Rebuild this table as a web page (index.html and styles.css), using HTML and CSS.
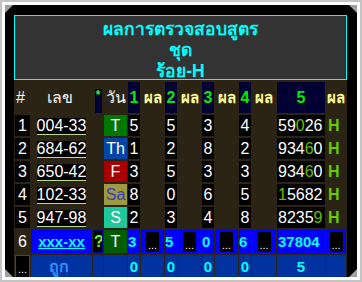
FILE: index.html
```html
<!DOCTYPE html>
<html lang="th">
<head>
<meta charset="utf-8">
<link rel="stylesheet" href="styles.css">
</head>
<body>
<div class="frame">
  <div class="bevel">
    <div class="box">
      <div class="title">ผลการตรวจสอบสูตร<br>ชุด<br>ร้อย-H</div>
      <table class="grid">
        <colgroup>
          <col class="c-idx"><col class="c-num"><col class="c-star"><col class="c-day">
          <col class="c-d"><col class="c-r"><col class="c-d"><col class="c-r">
          <col class="c-d"><col class="c-r"><col class="c-d"><col class="c-r4">
          <col class="c-five"><col class="c-res">
        </colgroup>
        <tr class="head">
          <th class="h-idx">#</th><th class="h-txt h-num">เลข</th><th class="h-star"><span class="star">*</span></th><th class="h-txt">วัน</th>
          <th class="hn">1</th><th class="hr">ผล</th>
          <th class="hn">2</th><th class="hr">ผล</th>
          <th class="hn">3</th><th class="hr">ผล</th>
          <th class="hn">4</th><th class="hr">ผล</th>
          <th class="hn">5</th><th class="hr">ผล</th>
        </tr>
        <tr class="data">
          <td class="blk idx">1</td><td class="numc"><span class="num">004-33</span></td><td></td><td class="day d-t">T</td>
          <td class="blk">5</td><td></td><td class="blk">5</td><td></td><td class="blk">3</td><td></td><td class="blk">4</td><td></td>
          <td class="blk five">59<span class="hit">0</span>26</td><td class="res">H</td>
        </tr>
        <tr class="data">
          <td class="blk idx">2</td><td class="numc"><span class="num">684-62</span></td><td></td><td class="day d-th">Th</td>
          <td class="blk">1</td><td></td><td class="blk">2</td><td></td><td class="blk">8</td><td></td><td class="blk">2</td><td></td>
          <td class="blk five">934<span class="hit">6</span>0</td><td class="res">H</td>
        </tr>
        <tr class="data">
          <td class="blk idx">3</td><td class="numc"><span class="num">650-42</span></td><td></td><td class="day d-f">F</td>
          <td class="blk">3</td><td></td><td class="blk">5</td><td></td><td class="blk">3</td><td></td><td class="blk">3</td><td></td>
          <td class="blk five">934<span class="hit">6</span>0</td><td class="res">H</td>
        </tr>
        <tr class="data">
          <td class="blk idx">4</td><td class="numc"><span class="num">102-33</span></td><td></td><td class="day d-sa">Sa</td>
          <td class="blk">8</td><td></td><td class="blk">0</td><td></td><td class="blk">6</td><td></td><td class="blk">5</td><td></td>
          <td class="blk five"><span class="hit">1</span>5682</td><td class="res">H</td>
        </tr>
        <tr class="data">
          <td class="blk idx">5</td><td class="numc"><span class="num">947-98</span></td><td></td><td class="day d-s">S</td>
          <td class="blk">2</td><td></td><td class="blk">3</td><td></td><td class="blk">4</td><td></td><td class="blk">8</td><td></td>
          <td class="blk five">8235<span class="hit">9</span></td><td class="res">H</td>
        </tr>
        <tr class="next">
          <td class="idx plain">6</td><td class="nb"><span class="xnum">xxx-xx</span></td><td class="q">?</td><td class="day d-t2">T</td>
          <td class="nb cy">3</td><td class="nb"><span class="dots">...</span></td>
          <td class="nb cy">5</td><td class="nb"><span class="dots">...</span></td>
          <td class="nb cy">0</td><td class="nb"><span class="dots">...</span></td>
          <td class="nb cy">6</td><td class="nb"><span class="dots">...</span></td>
          <td class="nb cy">37804</td><td class="nb"><span class="dots">...</span></td>
        </tr>
        <tr class="sum">
          <td class="sb"><span class="dbox">...</span></td><td class="sb ok">ถูก</td><td class="sb"></td><td class="sb"></td>
          <td class="sb cy">0</td><td class="sb"></td>
          <td class="sb cy">0</td><td class="sb"></td>
          <td class="sb cy">0</td><td class="sb"></td>
          <td class="sb cy">0</td><td class="sb"></td>
          <td class="sb cy">5</td><td class="sb"></td>
        </tr>
      </table>
    </div>
  </div>
</div>
</body>
</html>
```

FILE: styles.css
```css
* { box-sizing: border-box; }
html, body { margin: 0; padding: 0; background: #fff; }
body { font-family: "Liberation Sans", Arial, sans-serif; }

.frame {
  width: 362px;
  height: 282px;
  border: 2px solid #c4c4c4;
  padding: 3px;
  background: #fff;
}
.bevel {
  width: 352px;
  height: 272px;
  background: #a0a0a0;
}
.box {
  width: 100%;
  height: 100%;
  background: #000;
  clip-path: polygon(8px 0, calc(100% - 8px) 0, 100% 8px, 100% calc(100% - 8px), calc(100% - 8px) 100%, 8px 100%, 0 calc(100% - 8px), 0 8px);
  padding: 10px 10px 0 9px;
}
.title {
  width: 333px;
  height: 65px;
  border: 1px solid #00ffff;
  background: #333333;
  color: #00ffff;
  font-weight: bold;
  font-size: 17.5px;
  line-height: 21px;
  text-align: center;
  padding-top: 3px;
}

.grid {
  width: 333px;
  table-layout: fixed;
  border-collapse: separate;
  border-spacing: 1px 2px;
  background: #2b2313;
  color: #fff;
  font-size: 16px;
}
.c-idx { width: 15px; }
.c-num { width: 61px; }
.c-star { width: 10px; }
.c-day { width: 23px; }
.c-d { width: 12px; }
.c-r { width: 23px; }
.c-r4 { width: 24px; }
.c-five { width: 48px; }
.c-res { width: 20px; }

.grid th, .grid td {
  padding: 0;
  text-align: center;
  vertical-align: middle;
  white-space: nowrap;
  overflow: hidden;
}
.head th { height: 24px; font-weight: normal; line-height: 24px; }
.h-idx { text-align: left !important; padding-left: 1px !important; color: #fff; }
.h-txt { color: #f4f4f4; }
.h-num { padding-left: 16px !important; text-align: left !important; }
.h-star { vertical-align: top !important; }
.star {
  display: inline-block;
  width: 7px;
  height: 24px;
  background: #000033;
  color: #22ff22;
  font-size: 12px;
  font-weight: bold;
  line-height: 13px;
}
.hn { background: #000033; color: #00ee00; font-weight: bold !important; }
.hr { color: #ffff99; font-weight: bold !important; font-size: 15px; }

.data td { height: 21px; line-height: 21px; }
.blk { background: #000; }
.five { text-align: left !important; padding-left: 1px !important; }
.hit { color: #66bb00; }
.res { color: #66cc00; font-weight: bold; text-align: left !important; padding-left: 2px !important; }
.num {
  display: inline-block;
  background: #000;
  line-height: 16px;
  border-bottom: 1px solid #b8dc88;
  vertical-align: middle;
}
.day { color: #fff; }
.d-t { background: #007800; }
.d-th { background: #0046a8; }
.d-f { background: #a80000; }
.d-sa { background: #9c9a3c; color: #3838c8; }
.d-s { background: #1ec89a; }
.d-t2 { background: #005c00; }

.next td { height: 21px; line-height: 21px; }
.nb { background: #0000ff; }
.plain { color: #fff; }
.xnum {
  color: #00ffff;
  font-weight: bold;
  text-decoration: underline;
  font-size: 15px;
}
.q {
  background: #000;
  border: 1px solid #000088;
  color: #66ff22;
  font-weight: bold;
}
.cy { color: #00ffff; font-weight: bold; font-size: 15px; }
.next .cy { text-align: left; }
.next td:nth-child(13) { text-align: left; padding-left: 1px; }
.dots {
  display: inline-block;
  width: 13px;
  height: 20px;
  background: #000;
  color: #fff;
  font-size: 11px;
  line-height: 26px;
  vertical-align: middle;
}

.sum td { height: 23px; line-height: 23px; }
.sb { background: #0033a0; }
.dbox {
  display: inline-block;
  width: 15px;
  height: 23px;
  background: #000;
  border: 1px solid #0044ff;
  color: #fff;
  font-size: 11px;
  line-height: 26px;
  vertical-align: top;
}
.ok { color: #2d8cff; font-weight: bold; font-size: 16px; text-align: left !important; padding-left: 18px !important; }
```
